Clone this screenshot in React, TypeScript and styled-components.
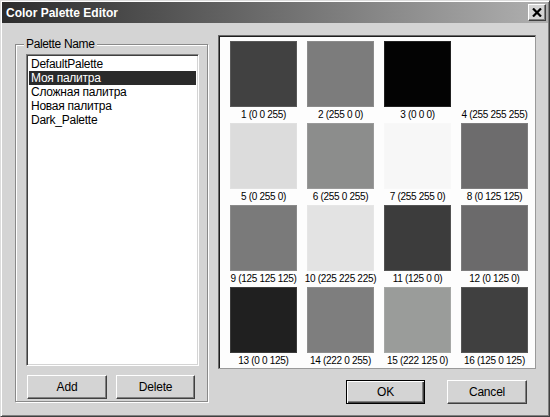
import React from 'react';
import styled, { createGlobalStyle } from 'styled-components';

type Swatch = {
  label: string;
  color: string;
};

const palettes = ['DefaultPalette', 'Моя палитра', 'Сложная палитра', 'Новая палитра', 'Dark_Palette'];

const swatches: Swatch[] = [
  { label: '1 (0 0 255)', color: '#414141' },
  { label: '2 (255 0 0)', color: '#7c7c7c' },
  { label: '3 (0 0 0)', color: '#030303' },
  { label: '4 (255 255 255)', color: '#fdfdfd' },
  { label: '5 (0 255 0)', color: '#dcdcdc' },
  { label: '6 (255 0 255)', color: '#8c8d8c' },
  { label: '7 (255 255 0)', color: '#f7f7f7' },
  { label: '8 (0 125 125)', color: '#6d6c6d' },
  { label: '9 (125 125 125)', color: '#7a7a7a' },
  { label: '10 (225 225 225)', color: '#e3e3e3' },
  { label: '11 (125 0 0)', color: '#3c3c3c' },
  { label: '12 (0 125 0)', color: '#6b6a6b' },
  { label: '13 (0 0 125)', color: '#202020' },
  { label: '14 (222 0 255)', color: '#7e7e7e' },
  { label: '15 (222 125 0)', color: '#9a9c9a' },
  { label: '16 (125 0 125)', color: '#404040' },
];

const GlobalStyle = createGlobalStyle`
  html, body {
    margin: 0;
    padding: 0;
    background: #d4d4d4;
  }
  * {
    box-sizing: border-box;
  }
`;

const Window = styled.div`
  width: 550px;
  height: 417px;
  padding: 1px;
  background: #d4d4d4;
  border: 1px solid;
  border-color: #dcdcdc #404040 #404040 #dcdcdc;
  box-shadow: inset 1px 1px 0 #ffffff, inset -1px -1px 0 #808080;
  font-family: 'Liberation Sans', Arial, sans-serif;
  color: #000;
  display: flex;
  flex-direction: column;
`;

const TitleBar = styled.div`
  height: 21px;
  display: flex;
  align-items: center;
  justify-content: space-between;
  padding: 0 2px 0 4px;
  background: linear-gradient(to right, #2c2c2c, #b0b0b0);
`;

const Title = styled.span`
  color: #fff;
  font-weight: bold;
  font-size: 12px;
`;

const CloseButton = styled.div`
  width: 18px;
  height: 17px;
  background: #d4d4d4;
  border: 1px solid;
  border-color: #ffffff #404040 #404040 #ffffff;
  box-shadow: inset -1px -1px 0 #808080;
  display: flex;
  align-items: center;
  justify-content: center;
`;

const Body = styled.div`
  flex: 1;
  display: flex;
  align-items: flex-start;
  padding: 12px 12px 0 13px;
  gap: 10px;
`;

const GroupBox = styled.div`
  position: relative;
  margin-top: 9px;
  width: 193px;
  height: 358px;
  padding: 9px 8px 0 10px;
  border: 1px solid #8a8a8a;
  box-shadow: inset 1px 1px 0 #ffffff, 1px 1px 0 #ffffff;
  display: flex;
  flex-direction: column;
`;

const Legend = styled.span`
  position: absolute;
  top: -8px;
  left: 8px;
  padding: 0 2px;
  background: #d4d4d4;
  font-size: 12px;
  letter-spacing: -0.35px;
`;

const ListBox = styled.div`
  width: 173px;
  height: 312px;
  background: #ffffff;
  border: 1px solid;
  border-color: #808080 #ffffff #ffffff #808080;
  box-shadow: inset 1px 1px 0 #404040, inset -1px -1px 0 #d4d4d4;
  padding: 2px 2px;
`;

const ListItem = styled.div<{ $selected?: boolean }>`
  height: 14px;
  line-height: 14px;
  padding-left: 2px;
  font-size: 12px;
  letter-spacing: -0.25px;
  white-space: nowrap;
  background: ${p => (p.$selected ? '#2a2a2a' : 'transparent')};
  color: ${p => (p.$selected ? '#ffffff' : '#000000')};
`;

const GroupButtons = styled.div`
  display: flex;
  gap: 9px;
  margin-top: 9px;
  padding-left: 1px;
`;

const Button = styled.button<{ $width: number; $default?: boolean }>`
  width: ${p => p.$width}px;
  height: 24px;
  padding: 0;
  background: #d4d4d4;
  font-family: 'Liberation Sans', Arial, sans-serif;
  font-size: 12px;
  letter-spacing: -0.2px;
  color: #000;
  border: 1px solid;
  border-color: ${p => (p.$default ? '#000000' : '#ffffff #404040 #404040 #ffffff')};
  box-shadow: ${p =>
    p.$default
      ? 'inset 1px 1px 0 #ffffff, inset -1px -1px 0 #404040, inset -2px -2px 0 #808080'
      : 'inset -1px -1px 0 #808080'};
`;

const RightColumn = styled.div`
  width: 318px;
  display: flex;
  flex-direction: column;
`;

const SwatchPanel = styled.div`
  height: 334px;
  background: #fdfdfd;
  border: 1px solid;
  border-color: #6a6a6a #9a9a9a #9a9a9a #6a6a6a;
  box-shadow: inset 1px 1px 0 #1e1e1e;
  padding: 5px 0 0 6px;
  display: grid;
  grid-template-columns: repeat(4, 77px);
  grid-auto-rows: 82px;
`;

const SwatchCell = styled.div`
  display: flex;
  flex-direction: column;
  align-items: center;
`;

const SwatchBox = styled.div<{ $color: string }>`
  width: 67px;
  height: 66px;
  background: ${p => p.$color};
  box-shadow: inset 0 0 0 1px rgba(255, 255, 255, 0.12);
`;

const SwatchLabel = styled.span`
  margin-top: 1px;
  font-size: 10px;
  letter-spacing: -0.3px;
  line-height: 13px;
  white-space: nowrap;
`;

const DialogButtons = styled.div`
  display: flex;
  justify-content: flex-end;
  gap: 22px;
  margin-top: 11px;
  padding-right: 9px;
`;

export default function App() {
  return (
    <>
      <GlobalStyle />
      <Window>
        <TitleBar>
          <Title>Color Palette Editor</Title>
          <CloseButton>
            <svg width="10" height="9" viewBox="0 0 10 9">
              <path d="M1 0.5 L9 8.5 M9 0.5 L1 8.5" stroke="#000" strokeWidth="2.2" />
            </svg>
          </CloseButton>
        </TitleBar>
        <Body>
          <GroupBox>
            <Legend>Palette Name</Legend>
            <ListBox>
              {palettes.map((name, index) => (
                <ListItem key={name} $selected={index === 1}>
                  {name}
                </ListItem>
              ))}
            </ListBox>
            <GroupButtons>
              <Button $width={80}>Add</Button>
              <Button $width={79}>Delete</Button>
            </GroupButtons>
          </GroupBox>
          <RightColumn>
            <SwatchPanel>
              {swatches.map(swatch => (
                <SwatchCell key={swatch.label}>
                  <SwatchBox $color={swatch.color} />
                  <SwatchLabel>{swatch.label}</SwatchLabel>
                </SwatchCell>
              ))}
            </SwatchPanel>
            <DialogButtons>
              <Button $width={79} $default>
                OK
              </Button>
              <Button $width={80}>Cancel</Button>
            </DialogButtons>
          </RightColumn>
        </Body>
      </Window>
    </>
  );
}
